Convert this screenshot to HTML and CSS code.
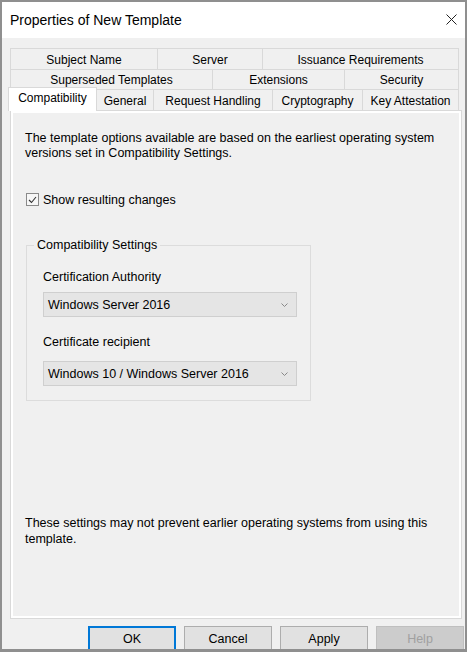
FILE: index.html
```html
<!DOCTYPE html>
<html lang="en">
<head>
<meta charset="utf-8">
<title>Properties of New Template</title>
<link rel="stylesheet" href="styles.css">
</head>
<body>
<div class="window">
  <div class="titlebar">
    <span class="title">Properties of New Template</span>
    <svg class="close" width="11" height="11" viewBox="0 0 11 11"><path d="M0.5 0.5 L10.5 10.5 M10.5 0.5 L0.5 10.5" stroke="#222" stroke-width="1" fill="none"/></svg>
  </div>
  <div class="client">
    <div class="tabs">
      <div class="tabrow row1">
        <div class="tab">Subject Name</div>
        <div class="tab">Server</div>
        <div class="tab">Issuance Requirements</div>
      </div>
      <div class="tabrow row2">
        <div class="tab">Superseded Templates</div>
        <div class="tab">Extensions</div>
        <div class="tab">Security</div>
      </div>
      <div class="tabrow row3">
        <div class="tab selected">Compatibility</div>
        <div class="tab t-general">General</div>
        <div class="tab t-request">Request Handling</div>
        <div class="tab t-crypto">Cryptography</div>
        <div class="tab t-key">Key Attestation</div>
      </div>
    </div>
    <div class="panel">
      <p class="intro">The template options available are based on the earliest operating system<br>versions set in Compatibility Settings.</p>
      <label class="check-row">
        <span class="checkbox"><svg width="9" height="8" viewBox="0 0 9 8"><path d="M1 4 L3.5 6.5 L8 1" stroke="#333" stroke-width="1.1" fill="none"/></svg></span>
        <span>Show resulting changes</span>
      </label>
      <fieldset class="group">
        <legend>Compatibility Settings</legend>
        <div class="field-label first">Certification Authority</div>
        <div class="select">
          <span>Windows Server 2016</span>
          <svg class="chev" width="7" height="4" viewBox="0 0 7 4"><path d="M0.5 0.5 L3.5 3.5 L6.5 0.5" stroke="#888" stroke-width="1" fill="none"/></svg>
        </div>
        <div class="field-label second">Certificate recipient</div>
        <div class="select second-select">
          <span>Windows 10 / Windows Server 2016</span>
          <svg class="chev" width="7" height="4" viewBox="0 0 7 4"><path d="M0.5 0.5 L3.5 3.5 L6.5 0.5" stroke="#888" stroke-width="1" fill="none"/></svg>
        </div>
      </fieldset>
      <p class="note">These settings may not prevent earlier operating systems from using this<br>template.</p>
    </div>
    <div class="buttons">
      <button class="btn default">OK</button>
      <button class="btn">Cancel</button>
      <button class="btn">Apply</button>
      <button class="btn disabled">Help</button>
    </div>
  </div>
</div>
</body>
</html>
```
FILE: styles.css
```css
* { box-sizing: border-box; }

html, body {
  margin: 0;
  padding: 0;
  background: #ffffff;
}

body {
  font-family: "Liberation Sans", Arial, sans-serif;
  font-size: 12px;
  color: #000;
}

.window {
  width: 467px;
  height: 652px;
  border: 2px solid #8f8f8f;
  border-bottom-width: 3px;
  display: flex;
  flex-direction: column;
  overflow: hidden;
  background: #f0f0f0;
}

.titlebar {
  height: 36px;
  flex: 0 0 36px;
  background: #ffffff;
  display: flex;
  align-items: center;
  justify-content: space-between;
  padding: 0 8px 1px 8px;
}

.title {
  font-size: 14px;
  color: #000;
}

.close {
  display: block;
}

.client {
  flex: 1;
  display: flex;
  flex-direction: column;
  padding: 10px 3px 0 8px;
  min-height: 0;
}

.tabs {
  display: flex;
  flex-direction: column;
}

.tabrow {
  display: flex;
  width: 449px;
}

.row1 { height: 21px; }
.row2 { height: 20px; }
.row3 { height: 21px; }

.tab {
  display: flex;
  align-items: center;
  justify-content: center;
  border-top: 1px solid #d9d9d9;
  border-left: 1px solid #d9d9d9;
  white-space: nowrap;
  color: #000;
  padding-top: 1px;
}

.tab:last-child {
  border-right: 1px solid #d9d9d9;
}

.row1 .tab:nth-child(1) { width: 147px; }
.row1 .tab:nth-child(2) { width: 105px; }
.row1 .tab:nth-child(3) { width: 197px; }

.row2 .tab:nth-child(1) { width: 202px; }
.row2 .tab:nth-child(2) { width: 132px; }
.row2 .tab:nth-child(3) { width: 115px; }

.tab.selected {
  width: 89px;
  height: 24px;
  margin: -2px 0 -1px -2px;
  background: #ffffff;
  border-right: 1px solid #d9d9d9;
  z-index: 1;
  padding-top: 0;
  padding-bottom: 3px;
}

.t-general { width: 56px; border-left: none; }
.t-request { width: 119px; }
.t-crypto { width: 90px; }
.t-key { width: 97px; }

.panel {
  flex: 0 0 509px;
  width: 452px;
  border: 1px solid #d9d9d9;
  box-shadow: inset 0 0 0 2px #ffffff;
  background: #f0f0f0;
  display: flex;
  flex-direction: column;
  padding: 20px 10px 0 14px;
  font-size: 12.5px;
}

.intro {
  margin: 0;
  line-height: 15px;
  white-space: nowrap;
}

.check-row {
  display: flex;
  align-items: center;
  gap: 4px;
  margin-top: 31px;
  margin-left: 1px;
  height: 15px;
}

.checkbox {
  width: 13px;
  height: 13px;
  border: 1px solid #8a8a8a;
  background: #f7f7f7;
  display: flex;
  align-items: center;
  justify-content: center;
}

.group {
  margin: 31px 0 0 1px;
  width: 285px;
  border: 1px solid #dcdcdc;
  padding: 0 12px 14px 16px;
  min-width: 0;
}

.group legend {
  margin-left: -9px;
  padding: 0 3px;
  line-height: 15px;
}

.field-label {
  line-height: 15px;
}

.field-label.first { margin-top: 17px; }
.field-label.second { margin-top: 18px; }

.select {
  width: 254px;
  height: 25px;
  margin-top: 7px;
  border: 1px solid #cfcfcf;
  background: #e5e5e5;
  display: flex;
  align-items: center;
  justify-content: space-between;
  padding: 0 8px 0 4px;
}

.select.second-select { margin-top: 11px; }

.chev { display: block; }

.note {
  margin: auto 0 0 0;
  padding-bottom: 71px;
  line-height: 16px;
  white-space: nowrap;
}

.buttons {
  display: flex;
  justify-content: flex-end;
  gap: 8px;
  margin: 7px -2px 0 0;
}

.btn {
  width: 88px;
  height: 25px;
  flex: 0 0 88px;
  font-family: "Liberation Sans", Arial, sans-serif;
  font-size: 12.5px;
  color: #000;
  background: #e1e1e1;
  border: 1px solid #adadad;
  padding: 0;
}

.btn.default {
  border: 1px solid #0078d7;
  box-shadow: inset 0 0 0 1px #0078d7;
}

.btn.disabled {
  background: #cccccc;
  border-color: #bfbfbf;
  color: #a0a0a0;
}
```
